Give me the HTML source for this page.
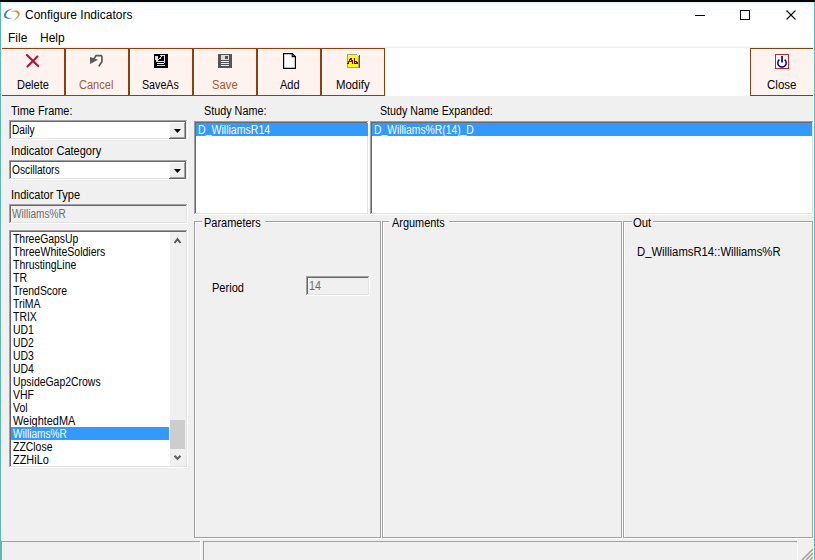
<!DOCTYPE html>
<html><head><meta charset="utf-8">
<style>
*{margin:0;padding:0;box-sizing:border-box}
html,body{width:815px;height:560px;overflow:hidden;background:#f0f0f0;position:relative;font-family:"Liberation Sans",sans-serif;font-size:12px;color:#000}
.a{position:absolute}
.t{position:absolute;white-space:pre;line-height:15px;font-size:12px;transform-origin:0 0}
</style></head><body>
<div class="a" style="left:0px;top:0px;width:815px;height:2px;background:#000;"></div>
<div class="a" style="left:1px;top:2px;width:813px;height:45px;background:#fff;"></div>
<div class="a" style="left:1px;top:46px;width:813px;height:1px;background:#f7f7f7;"></div>
<div class="a" style="left:1px;top:47px;width:813px;height:1px;background:#efefef;"></div>
<div class="a" style="left:1px;top:48px;width:813px;height:48px;background:#fff;"></div>
<div class="a" style="left:0px;top:2px;width:815px;height:1px;background:#d8f4f4;"></div>
<div class="a" style="left:0px;top:2px;width:1px;height:558px;background:#62b5b0;"></div>
<div class="a" style="left:1px;top:3px;width:1px;height:557px;background:#d0f8f8;"></div>
<div class="a" style="left:814px;top:2px;width:1px;height:558px;background:#58bfbf;"></div>
<div class="a" style="left:813px;top:3px;width:1px;height:557px;background:#e0fcfc;"></div>
<svg class="a" style="left:0;top:0" width="24" height="24" viewBox="0 0 24 24">
<path d="M13.3 8.4 C8 8.5 3.9 12 4 15.6 C4.1 18.5 7.5 19.7 12.6 18.3 C8.5 18.4 6.0 17.2 6.0 15.2 C6.2 12 9.5 9.4 13.3 8.4 Z" fill="#3d7dc0"/>
<path d="M10.6 11.6 C13 10.4 16 10 18 10.9 C20 11.9 20.1 14.4 19.1 16.1 C17.6 18.7 15 20.4 12.4 21.1 C15 19.4 17.4 17.5 17.9 15.1 C18.2 12.7 15 11.1 10.6 11.6 Z" fill="#e48c34"/>
</svg>
<div class="t" style="left:25px;top:8px">Configure Indicators</div>
<div class="a" style="left:695px;top:15px;width:10px;height:1px;background:#000;"></div>
<div class="a" style="left:740px;top:10px;width:10px;height:10px;border:1px solid #000"></div>
<svg class="a" style="left:786px;top:10px" width="10" height="10" viewBox="0 0 10 10"><path d="M0.5 0.5 L9.5 9.5 M9.5 0.5 L0.5 9.5" stroke="#000" stroke-width="1.1"/></svg>
<div class="t" style="left:8px;top:31px">File</div>
<div class="t" style="left:40px;top:31px">Help</div>
<div class="a" style="left:1px;top:48px;width:64px;height:48px;border:1px solid #8f4010;background:#fef3ee;box-shadow:inset 1px 1px 0 #fffaf0"></div>
<div class="a" style="left:65px;top:48px;width:64px;height:48px;border:1px solid #8f4010;background:#fef3ee;box-shadow:inset 1px 1px 0 #fffaf0"></div>
<div class="a" style="left:129px;top:48px;width:64px;height:48px;border:1px solid #8f4010;background:#fef3ee;box-shadow:inset 1px 1px 0 #fffaf0"></div>
<div class="a" style="left:193px;top:48px;width:64px;height:48px;border:1px solid #8f4010;background:#fef3ee;box-shadow:inset 1px 1px 0 #fffaf0"></div>
<div class="a" style="left:257px;top:48px;width:64px;height:48px;border:1px solid #8f4010;background:#fef3ee;box-shadow:inset 1px 1px 0 #fffaf0"></div>
<div class="a" style="left:321px;top:48px;width:64px;height:48px;border:1px solid #8f4010;background:#fef3ee;box-shadow:inset 1px 1px 0 #fffaf0"></div>
<div class="a" style="left:750px;top:48px;width:64px;height:48px;border:1px solid #7c4418;background:#fef3ee;box-shadow:inset 1px 1px 0 #fffaf0"></div>
<svg class="a" style="left:20px;top:50px" width="25" height="22" viewBox="0 0 25 22"><path d="M6.9 4.9 L18.2 16.1 M17.4 6.6 L7.4 16.4" stroke="#b41038" stroke-width="2.1" stroke-linecap="round"/></svg>
<svg class="a" style="left:88px;top:53px" width="17" height="16" viewBox="0 0 17 16"><path d="M2 4 L2 11 L10 6.8 Z" fill="#5a5a5a"/><path d="M5.5 6.5 L8 2.6 L13.2 2.6 L13.9 3.6 L13.9 8.8 L10.8 13.3" fill="none" stroke="#5a5a5a" stroke-width="1.7" stroke-linejoin="round"/></svg>
<svg class="a" style="left:154px;top:54px" width="14" height="14" viewBox="0 0 14 14" shape-rendering="crispEdges"><rect x="0" y="0" width="14" height="14" fill="#000"/><g fill="#ecd4f4"><rect x="1" y="2" width="3" height="4"/><rect x="2" y="6" width="2" height="2"/><rect x="4" y="5" width="1" height="1"/><rect x="5" y="4" width="1" height="1"/><rect x="6" y="3" width="1" height="2"/><rect x="7" y="2" width="1" height="1"/><rect x="6" y="1" width="5" height="1"/><rect x="10" y="1" width="1" height="8"/><rect x="3" y="7" width="8" height="1"/></g><rect x="3" y="9" width="7" height="1" fill="#f0f0e0"/><rect x="3" y="11" width="8" height="1" fill="#e4e070"/></svg>
<svg class="a" style="left:218px;top:54px" width="14" height="14" viewBox="0 0 14 14"><rect x="0" y="0" width="14" height="14" fill="#555"/><rect x="3" y="1" width="8" height="5" fill="#dcdcdc"/><rect x="7" y="2" width="3" height="3" fill="#555"/><rect x="3" y="7" width="8" height="1" fill="#e8e8e8"/><rect x="3" y="9" width="8" height="1" fill="#e8e8e8"/><rect x="3" y="11" width="8" height="1" fill="#e8e8e8"/></svg>
<svg class="a" style="left:283px;top:53px" width="14" height="16" viewBox="0 0 14 16"><path d="M0.6 0.6 H9.2 L12.4 3.8 V15.4 H0.6 Z" fill="#fff" stroke="#000" stroke-width="1.2"/><path d="M9.2 0.6 V3.6 H12.4" fill="none" stroke="#000" stroke-width="1.1"/></svg>
<svg class="a" style="left:347px;top:54px" width="13" height="14" viewBox="0 0 13 14" shape-rendering="crispEdges"><rect x="0" y="0" width="12" height="14" fill="#a4a470"/><rect x="1" y="1" width="10" height="12" fill="#ffff00"/><rect x="10" y="0" width="2" height="1" fill="#fef3ee"/><rect x="11" y="1" width="1" height="1" fill="#fef3ee"/><rect x="12" y="1" width="1" height="13" fill="#505070"/><g fill="#7a0000"><rect x="3" y="4" width="1" height="1"/><rect x="4" y="4" width="1" height="1"/><rect x="7" y="4" width="1" height="1"/><rect x="2" y="5" width="1" height="1"/><rect x="3" y="5" width="1" height="1"/><rect x="4" y="5" width="1" height="1"/><rect x="7" y="5" width="1" height="1"/><rect x="2" y="6" width="1" height="1"/><rect x="4" y="6" width="1" height="1"/><rect x="5" y="6" width="1" height="1"/><rect x="7" y="6" width="1" height="1"/><rect x="1" y="7" width="1" height="1"/><rect x="2" y="7" width="1" height="1"/><rect x="3" y="7" width="1" height="1"/><rect x="4" y="7" width="1" height="1"/><rect x="5" y="7" width="1" height="1"/><rect x="7" y="7" width="1" height="1"/><rect x="8" y="7" width="1" height="1"/><rect x="9" y="7" width="1" height="1"/><rect x="1" y="8" width="1" height="1"/><rect x="5" y="8" width="1" height="1"/><rect x="7" y="8" width="1" height="1"/><rect x="9" y="8" width="1" height="1"/><rect x="10" y="8" width="1" height="1"/><rect x="0" y="9" width="1" height="1"/><rect x="1" y="9" width="1" height="1"/><rect x="5" y="9" width="1" height="1"/><rect x="7" y="9" width="1" height="1"/><rect x="8" y="9" width="1" height="1"/><rect x="9" y="9" width="1" height="1"/><rect x="10" y="9" width="1" height="1"/></g></svg>
<svg class="a" style="left:775px;top:54px" width="14" height="15" viewBox="0 0 14 15"><rect x="0.5" y="0.5" width="13" height="14" fill="#fff" stroke="#b03030" stroke-width="1"/><rect x="6.2" y="2" width="1.7" height="6.5" fill="#000080"/><path d="M4.4 5.6 A4.2 4.2 0 1 0 9.6 5.6" fill="none" stroke="#000080" stroke-width="1.5"/></svg>
<div class="t" style="left:17px;top:78px;transform:scaleX(0.92)">Delete</div>
<div class="t" style="left:79px;top:78px;transform:scaleX(0.92);color:#9c5c32">Cancel</div>
<div class="t" style="left:142px;top:78px;transform:scaleX(0.89)">SaveAs</div>
<div class="t" style="left:212px;top:78px;transform:scaleX(0.94);color:#9c5c32">Save</div>
<div class="t" style="left:280px;top:78px;transform:scaleX(0.92)">Add</div>
<div class="t" style="left:336px;top:78px;transform:scaleX(0.95)">Modify</div>
<div class="t" style="left:767px;top:78px;transform:scaleX(0.96)">Close</div>
<div class="t" style="left:11px;top:104px;transform:scaleX(0.91)">Time Frame:</div>
<div class="a" style="left:9px;top:120px;width:179px;height:20px;background:#fff;"></div>
<div class="a" style="left:9px;top:120px;width:178px;height:19px;background:#a0a0a0;"></div>
<div class="a" style="left:10px;top:121px;width:177px;height:18px;background:#e3e3e3;"></div>
<div class="a" style="left:10px;top:121px;width:176px;height:17px;background:#696969;"></div>
<div class="a" style="left:11px;top:122px;width:175px;height:16px;background:#fff;"></div>
<div class="t" style="left:12px;top:123px;transform:scaleX(0.85)">Daily</div>
<div class="a" style="left:169px;top:122px;width:17px;height:17px;background:#696969;"></div>
<div class="a" style="left:169px;top:122px;width:16px;height:16px;background:#fff;"></div>
<div class="a" style="left:170px;top:123px;width:15px;height:15px;background:#a0a0a0;"></div>
<div class="a" style="left:170px;top:123px;width:14px;height:14px;background:#f0f0f0;"></div>
<svg class="a" style="left:174px;top:129px" width="7" height="4" viewBox="0 0 7 4"><path d="M0 0 L7 0 L3.5 4 Z" fill="#000"/></svg>
<div class="t" style="left:11px;top:144px;transform:scaleX(0.92)">Indicator Category</div>
<div class="a" style="left:9px;top:160px;width:179px;height:20px;background:#fff;"></div>
<div class="a" style="left:9px;top:160px;width:178px;height:19px;background:#a0a0a0;"></div>
<div class="a" style="left:10px;top:161px;width:177px;height:18px;background:#e3e3e3;"></div>
<div class="a" style="left:10px;top:161px;width:176px;height:17px;background:#696969;"></div>
<div class="a" style="left:11px;top:162px;width:175px;height:16px;background:#fff;"></div>
<div class="t" style="left:12px;top:163px;transform:scaleX(0.85)">Oscillators</div>
<div class="a" style="left:169px;top:162px;width:17px;height:17px;background:#696969;"></div>
<div class="a" style="left:169px;top:162px;width:16px;height:16px;background:#fff;"></div>
<div class="a" style="left:170px;top:163px;width:15px;height:15px;background:#a0a0a0;"></div>
<div class="a" style="left:170px;top:163px;width:14px;height:14px;background:#f0f0f0;"></div>
<svg class="a" style="left:174px;top:169px" width="7" height="4" viewBox="0 0 7 4"><path d="M0 0 L7 0 L3.5 4 Z" fill="#000"/></svg>
<div class="t" style="left:11px;top:188px;transform:scaleX(0.92)">Indicator Type</div>
<div class="a" style="left:9px;top:204px;width:179px;height:20px;background:#fff;"></div>
<div class="a" style="left:9px;top:204px;width:178px;height:19px;background:#a0a0a0;"></div>
<div class="a" style="left:10px;top:205px;width:177px;height:18px;background:#e3e3e3;"></div>
<div class="a" style="left:10px;top:205px;width:176px;height:17px;background:#696969;"></div>
<div class="a" style="left:11px;top:206px;width:175px;height:16px;background:#f0f0f0;"></div>
<div class="t" style="left:12px;top:207px;transform:scaleX(0.84);color:#6d6d6d">Williams%R</div>
<div class="a" style="left:9px;top:230px;width:179px;height:238px;background:#fff;"></div>
<div class="a" style="left:9px;top:230px;width:178px;height:237px;background:#a0a0a0;"></div>
<div class="a" style="left:10px;top:231px;width:177px;height:236px;background:#e3e3e3;"></div>
<div class="a" style="left:10px;top:231px;width:176px;height:235px;background:#696969;"></div>
<div class="a" style="left:11px;top:232px;width:175px;height:234px;background:#fff;"></div>
<div class="t" style="left:13px;top:232px;transform:scaleX(0.867)">ThreeGapsUp</div>
<div class="t" style="left:13px;top:245px;transform:scaleX(0.876)">ThreeWhiteSoldiers</div>
<div class="t" style="left:13px;top:258px;transform:scaleX(0.87)">ThrustingLine</div>
<div class="t" style="left:13px;top:271px;transform:scaleX(0.87)">TR</div>
<div class="t" style="left:13px;top:284px;transform:scaleX(0.87)">TrendScore</div>
<div class="t" style="left:13px;top:297px;transform:scaleX(0.87)">TriMA</div>
<div class="t" style="left:13px;top:310px;transform:scaleX(0.87)">TRIX</div>
<div class="t" style="left:13px;top:323px;transform:scaleX(0.87)">UD1</div>
<div class="t" style="left:13px;top:336px;transform:scaleX(0.87)">UD2</div>
<div class="t" style="left:13px;top:349px;transform:scaleX(0.87)">UD3</div>
<div class="t" style="left:13px;top:362px;transform:scaleX(0.87)">UD4</div>
<div class="t" style="left:13px;top:375px;transform:scaleX(0.87)">UpsideGap2Crows</div>
<div class="t" style="left:13px;top:388px;transform:scaleX(0.87)">VHF</div>
<div class="t" style="left:13px;top:401px;transform:scaleX(0.87)">Vol</div>
<div class="t" style="left:13px;top:414px;transform:scaleX(0.91)">WeightedMA</div>
<div class="a" style="left:11px;top:427px;width:158px;height:13px;background:#3399ff;"></div>
<div class="t" style="left:13px;top:427px;transform:scaleX(0.84);color:#fff">Williams%R</div>
<div class="t" style="left:13px;top:440px;transform:scaleX(0.87)">ZZClose</div>
<div class="t" style="left:13px;top:453px;transform:scaleX(0.91)">ZZHiLo</div>
<div class="a" style="left:170px;top:232px;width:16px;height:234px;background:#f0f0f0;"></div>
<div class="a" style="left:170px;top:420px;width:15px;height:29px;background:#cdcdcd;"></div>
<svg class="a" style="left:173px;top:237px" width="9" height="8" viewBox="0 0 9 8"><path d="M1.5 6 L4.5 2.2 L7.5 6" fill="none" stroke="#555" stroke-width="2"/></svg>
<svg class="a" style="left:173px;top:454px" width="9" height="7" viewBox="0 0 9 7"><path d="M1.5 1.8 L4.5 4.8 L7.5 1.8" fill="none" stroke="#606060" stroke-width="2"/></svg>
<div class="t" style="left:204px;top:104px;transform:scaleX(0.9)">Study Name:</div>
<div class="a" style="left:194px;top:121px;width:175px;height:94px;background:#fff;"></div>
<div class="a" style="left:194px;top:121px;width:174px;height:93px;background:#a0a0a0;"></div>
<div class="a" style="left:195px;top:122px;width:173px;height:92px;background:#e3e3e3;"></div>
<div class="a" style="left:195px;top:122px;width:172px;height:91px;background:#696969;"></div>
<div class="a" style="left:196px;top:123px;width:171px;height:90px;background:#fff;"></div>
<div class="a" style="left:196px;top:123px;width:172px;height:13px;background:#3399ff;"></div>
<div class="t" style="left:198px;top:123px;transform:scaleX(0.88);color:#fff">D<span style="position:relative;top:-1px">_</span>WilliamsR14</div>
<div class="t" style="left:380px;top:104px;transform:scaleX(0.89)">Study Name Expanded:</div>
<div class="a" style="left:370px;top:121px;width:444px;height:94px;background:#fff;"></div>
<div class="a" style="left:370px;top:121px;width:443px;height:93px;background:#a0a0a0;"></div>
<div class="a" style="left:371px;top:122px;width:442px;height:92px;background:#e3e3e3;"></div>
<div class="a" style="left:371px;top:122px;width:441px;height:91px;background:#696969;"></div>
<div class="a" style="left:372px;top:123px;width:440px;height:90px;background:#fff;"></div>
<div class="a" style="left:372px;top:123px;width:440px;height:13px;background:#3399ff;"></div>
<div class="t" style="left:374px;top:123px;transform:scaleX(0.86);color:#fff">D<span style="position:relative;top:-1px">_</span>Williams%R(14)<span style="position:relative;top:-1px">_</span>D</div>
<div class="a" style="left:195px;top:222px;width:187px;height:317px;border:1px solid #fff"></div>
<div class="a" style="left:194px;top:221px;width:187px;height:317px;border:1px solid #a0a0a0"></div>
<div class="a" style="left:202px;top:215px;width:63px;height:13px;background:#f0f0f0;"></div>
<div class="t" style="left:204px;top:216px;transform:scaleX(0.915)">Parameters</div>
<div class="t" style="left:212px;top:281px;transform:scaleX(0.92)">Period</div>
<div class="a" style="left:306px;top:276px;width:64px;height:20px;background:#fff;"></div>
<div class="a" style="left:306px;top:276px;width:63px;height:19px;background:#a0a0a0;"></div>
<div class="a" style="left:307px;top:277px;width:62px;height:18px;background:#e3e3e3;"></div>
<div class="a" style="left:307px;top:277px;width:61px;height:17px;background:#696969;"></div>
<div class="a" style="left:308px;top:278px;width:60px;height:16px;background:#f0f0f0;"></div>
<div class="t" style="left:309px;top:279px;transform:scaleX(0.9);color:#6d6d6d">14</div>
<div class="a" style="left:383px;top:222px;width:240px;height:317px;border:1px solid #fff"></div>
<div class="a" style="left:382px;top:221px;width:240px;height:317px;border:1px solid #a0a0a0"></div>
<div class="a" style="left:389px;top:215px;width:60px;height:13px;background:#f0f0f0;"></div>
<div class="t" style="left:392px;top:216px;transform:scaleX(0.91)">Arguments</div>
<div class="a" style="left:624px;top:222px;width:190px;height:317px;border:1px solid #fff"></div>
<div class="a" style="left:623px;top:221px;width:190px;height:317px;border:1px solid #a0a0a0"></div>
<div class="a" style="left:632px;top:215px;width:21px;height:13px;background:#f0f0f0;"></div>
<div class="t" style="left:633px;top:216px;transform:scaleX(0.94)">Out</div>
<div class="t" style="left:637px;top:245px;transform:scaleX(0.94)">D<span style="position:relative;top:-1px">_</span>WilliamsR14::Williams%R</div>
<div class="a" style="left:1px;top:541px;width:199px;height:1px;background:#a0a0a0;"></div>
<div class="a" style="left:200px;top:541px;width:1px;height:19px;background:#fff;"></div>
<div class="a" style="left:203px;top:541px;width:594px;height:1px;background:#a0a0a0;"></div>
<div class="a" style="left:203px;top:541px;width:1px;height:19px;background:#a0a0a0;"></div>
<div class="a" style="left:797px;top:541px;width:1px;height:19px;background:#fff;"></div>
<svg class="a" style="left:800px;top:547px" width="14" height="14" viewBox="0 0 14 14"><path d="M13 2 L2 13 M13 6 L6 13 M13 10 L10 13" stroke="#a0a0a0" stroke-width="1.5"/></svg>
<div class="a" style="left:0px;top:2px;width:1px;height:558px;background:#62b5b0;"></div>
<div class="a" style="left:1px;top:3px;width:1px;height:557px;background:#d0f8f8;"></div>
<div class="a" style="left:814px;top:2px;width:1px;height:558px;background:#58bfbf;"></div>
<div class="a" style="left:813px;top:3px;width:1px;height:557px;background:#e0fcfc;"></div>
<div class="a" style="left:1px;top:541px;width:2px;height:1px;background:#a0a0a0;"></div>
<div class="a" style="left:1px;top:542px;width:1px;height:18px;background:#62b5b0;"></div>
<div class="a" style="left:2px;top:542px;width:1px;height:18px;background:#f4fafa;"></div>
</body></html>
